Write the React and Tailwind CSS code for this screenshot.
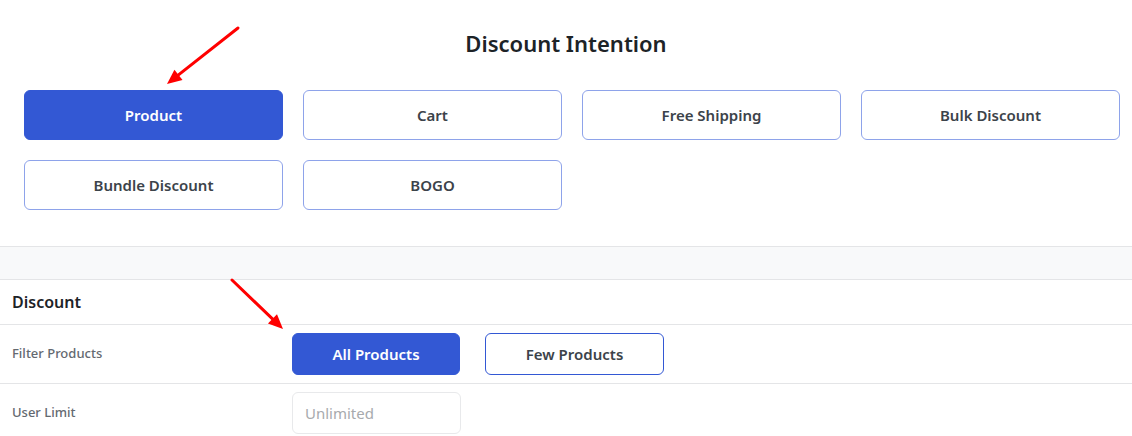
import React, { useState } from 'react';

const intentions = ['Product', 'Cart', 'Free Shipping', 'Bulk Discount', 'Bundle Discount', 'BOGO'];

const Arrow = ({ x1, y1, x2, y2 }) => {
  // red annotation arrow, tip at (x2, y2)
  const angle = Math.atan2(y2 - y1, x2 - x1);
  const len = 16;
  const spread = 0.42;
  const ax = x2 - len * Math.cos(angle - spread);
  const ay = y2 - len * Math.sin(angle - spread);
  const bx = x2 - len * Math.cos(angle + spread);
  const by = y2 - len * Math.sin(angle + spread);
  const sx = x2 - 11 * Math.cos(angle);
  const sy = y2 - 11 * Math.sin(angle);
  return (
    <g>
      <line x1={x1} y1={y1} x2={sx} y2={sy} stroke="#ff0000" strokeWidth="3" strokeLinecap="round" />
      <polygon points={`${x2},${y2} ${ax},${ay} ${bx},${by}`} fill="#ff0000" />
    </g>
  );
};

export default function App() {
  const [intention, setIntention] = useState('Product');
  const [filter, setFilter] = useState('all');

  return (
    <div
      className="relative w-[1132px] h-[436px] overflow-hidden bg-white text-[#3c434a]"
      style={{ fontFamily: '"Noto Sans", "Open Sans", sans-serif' }}
    >
      <div className="pt-[28px] pb-[36px]">
        <h2 className="text-center text-[22px] leading-[30px] font-semibold text-[#1d2327]">Discount Intention</h2>

        <div className="mt-[32px] ml-6 mr-3 grid grid-cols-4 gap-x-5 gap-y-5">
          {intentions.map((name) => {
            const active = intention === name;
            return (
              <button
                key={name}
                onClick={() => setIntention(name)}
                className={`h-[50px] rounded-md border text-[15px] font-semibold ${
                  active
                    ? 'bg-[#3358d4] border-[#3358d4] text-white'
                    : 'bg-white border-[#8ea3ea] text-[#3c434a]'
                }`}
              >
                {name}
              </button>
            );
          })}
        </div>
      </div>

      <div className="h-[34px] border-y border-[#e4e5e7] bg-[#f8f9fa]" />

      <div className="h-[45px] flex items-center px-3 border-b border-[#e4e5e7]">
        <h3 className="text-[16px] font-semibold text-[#1d2327]">Discount</h3>
      </div>

      <div className="h-[59px] flex items-center border-b border-[#e4e5e7]">
        <div className="w-[292px] pl-3 text-[13px] font-medium text-[#646970]">Filter Products</div>
        <div className="flex gap-[25px]">
          <button
            onClick={() => setFilter('all')}
            className={`w-[168px] h-[42px] rounded-md border text-[15px] font-semibold ${
              filter === 'all' ? 'bg-[#3358d4] border-[#3358d4] text-white' : 'bg-white border-[#3358d4] text-[#3c434a]'
            }`}
          >
            All Products
          </button>
          <button
            onClick={() => setFilter('few')}
            className={`w-[179px] h-[42px] rounded-md border text-[15px] font-semibold ${
              filter === 'few' ? 'bg-[#3358d4] border-[#3358d4] text-white' : 'bg-white border-[#3358d4] text-[#3c434a]'
            }`}
          >
            Few Products
          </button>
        </div>
      </div>

      <div className="h-[60px] flex items-start pt-2 bg-white border-b-[8px] border-[#f9f9f9]">
        <div className="w-[292px] pl-3 h-[42px] flex items-center text-[13px] font-medium text-[#646970]">User Limit</div>
        <input
          placeholder="Unlimited"
          className="w-[169px] h-[42px] rounded-md border border-[#e8e9eb] bg-white px-3 text-[15px] placeholder:text-[#a7aaad] outline-none"
        />
      </div>

      <svg className="absolute inset-0 pointer-events-none" width="1132" height="436">
        <Arrow x1={238} y1={28} x2={167} y2={84} />
        <Arrow x1={232} y1={280} x2={283} y2={329} />
      </svg>
    </div>
  );
}
